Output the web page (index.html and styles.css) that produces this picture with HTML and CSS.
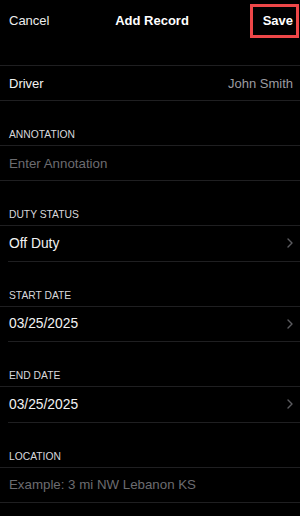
FILE: index.html
```html
<!DOCTYPE html>
<html lang="en">
<head>
<meta charset="utf-8">
<title>Add Record</title>
<link rel="stylesheet" href="styles.css">
</head>
<body>
<div class="screen">
  <header class="nav">
    <div class="nav-bar">
      <span class="nav-cancel">Cancel</span>
      <span class="nav-title">Add Record</span>
      <span class="nav-save">Save</span>
    </div>
  </header>

  <div class="row">
    <span class="label">Driver</span>
    <span class="value">John Smith</span>
  </div>

  <div class="section-header">ANNOTATION</div>
  <div class="row">
    <span class="placeholder">Enter Annotation</span>
  </div>

  <div class="section-header">DUTY STATUS</div>
  <div class="row inset">
    <span class="label big">Off Duty</span>
    <svg class="chevron" width="6" height="10" viewBox="0 0 6 10"><path d="M1 1 L5 5 L1 9" fill="none" stroke="#5c5c60" stroke-width="1.4" stroke-linecap="round" stroke-linejoin="round"/></svg>
  </div>

  <div class="section-header">START DATE</div>
  <div class="row inset">
    <span class="label big">03/25/2025</span>
    <svg class="chevron" width="6" height="10" viewBox="0 0 6 10"><path d="M1 1 L5 5 L1 9" fill="none" stroke="#5c5c60" stroke-width="1.4" stroke-linecap="round" stroke-linejoin="round"/></svg>
  </div>

  <div class="section-header">END DATE</div>
  <div class="row inset">
    <span class="label big">03/25/2025</span>
    <svg class="chevron" width="6" height="10" viewBox="0 0 6 10"><path d="M1 1 L5 5 L1 9" fill="none" stroke="#5c5c60" stroke-width="1.4" stroke-linecap="round" stroke-linejoin="round"/></svg>
  </div>

  <div class="section-header">LOCATION</div>
  <div class="row">
    <span class="placeholder">Example: 3 mi NW Lebanon KS</span>
  </div>
</div>
</body>
</html>
```

FILE: styles.css
```css
* { box-sizing: border-box; }

html, body {
  margin: 0;
  padding: 0;
  background: #000;
}

body {
  font-family: "Liberation Sans", Arial, sans-serif;
  color: #f2f2f2;
  width: 300px;
  height: 516px;
  overflow: hidden;
}

.screen {
  display: flex;
  flex-direction: column;
}

.nav {
  height: 66px;
  border-bottom: 1px solid #1f1f21;
}

.nav-bar {
  height: 41px;
  display: grid;
  grid-template-columns: 1fr auto 1fr;
  align-items: center;
  padding: 0 7px 0 9px;
  font-size: 13px;
  color: #fff;
}

.nav-cancel {
  justify-self: start;
  color: #ededed;
}

.nav-title {
  font-weight: bold;
  padding-left: 2px;
}

.nav-save {
  justify-self: end;
  font-weight: bold;
  position: relative;
}

.nav-save::after {
  content: "";
  position: absolute;
  left: -13px;
  right: -6px;
  top: -9px;
  bottom: -10px;
  border: 3px solid #ee4748;
}

.row {
  height: 35px;
  display: flex;
  align-items: center;
  justify-content: space-between;
  padding: 0 7px 0 9px;
  border-bottom: 1px solid #1f1f21;
  font-size: 13px;
}

.row.inset {
  margin-left: 8px;
  padding-left: 1px;
  height: 35.5px;
}

.label {
  color: #f2f2f2;
}

.label.big {
  font-size: 13.8px;
}

.value {
  color: #9c9ca0;
}

.placeholder {
  color: #6c6c70;
  font-size: 13.3px;
}

.section-header {
  height: 45px;
  display: flex;
  align-items: flex-end;
  padding: 0 9px 4px;
  border-bottom: 1px solid #1f1f21;
  font-size: 10.3px;
  line-height: 12px;
  color: #d8d8dc;
}

.chevron {
  display: block;
}
```
